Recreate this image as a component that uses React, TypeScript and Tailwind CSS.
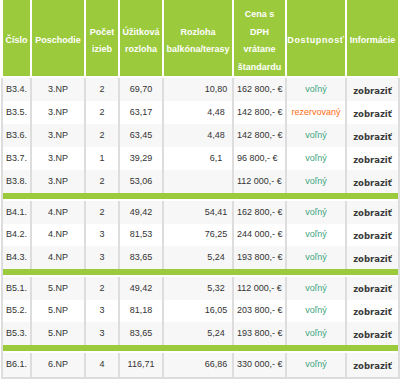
import React from "react";

type Row = {
  id: string;
  floor: string;
  rooms: string;
  area: string;
  balcony: string;
  price: string;
  status: "voľný" | "rezervovaný";
};

const groups: Row[][] = [
  [
    { id: "B3.4.", floor: "3.NP", rooms: "2", area: "69,70", balcony: "10,80", price: "162 800,- €", status: "voľný" },
    { id: "B3.5.", floor: "3.NP", rooms: "2", area: "63,17", balcony: "4,48", price: "142 800,- €", status: "rezervovaný" },
    { id: "B3.6.", floor: "3.NP", rooms: "2", area: "63,45", balcony: "4,48", price: "142 800,- €", status: "voľný" },
    { id: "B3.7.", floor: "3.NP", rooms: "1", area: "39,29", balcony: "6,1", price: "96 800,- €", status: "voľný" },
    { id: "B3.8.", floor: "3.NP", rooms: "2", area: "53,06", balcony: "", price: "112 000,- €", status: "voľný" },
  ],
  [
    { id: "B4.1.", floor: "4.NP", rooms: "2", area: "49,42", balcony: "54,41", price: "162 800,- €", status: "voľný" },
    { id: "B4.2.", floor: "4.NP", rooms: "3", area: "81,53", balcony: "76,25", price: "244 000,- €", status: "voľný" },
    { id: "B4.3.", floor: "4.NP", rooms: "3", area: "83,65", balcony: "5,24", price: "193 800,- €", status: "voľný" },
  ],
  [
    { id: "B5.1.", floor: "5.NP", rooms: "2", area: "49,42", balcony: "5,32", price: "112 000,- €", status: "voľný" },
    { id: "B5.2.", floor: "5.NP", rooms: "3", area: "81,18", balcony: "16,05", price: "203 800,- €", status: "voľný" },
    { id: "B5.3.", floor: "5.NP", rooms: "3", area: "83,65", balcony: "5,24", price: "193 800,- €", status: "voľný" },
  ],
  [
    { id: "B6.1.", floor: "6.NP", rooms: "4", area: "116,71", balcony: "66,86", price: "330 000,- €", status: "voľný" },
  ],
];

const headers: { label: React.ReactNode; extra?: string }[] = [
  { label: "Číslo" },
  { label: "Poschodie" },
  { label: <>Počet<br />izieb</> },
  { label: <>Úžitková<br />rozloha</> },
  { label: <>Rozloha<br />balkóna/terasy</> },
  { label: <>Cena s<br />DPH<br />vrátane<br />štandardu</> },
  { label: "Dostupnosť", extra: "tracking-[0.6px]" },
  { label: "Informácie" },
];

const widths = [29, 54, 34, 44, 70, 53, 60, 55];

export default function App() {
  return (
    <div className="w-[402px] h-[383px] bg-white overflow-hidden pl-[1px]">
      <table
        className="border-separate border-spacing-0 table-fixed text-[9px] text-[#333]"
        style={{ width: 399, fontFamily: '"Liberation Sans", Arial, sans-serif' }}
      >
        <colgroup>
          {widths.map((w, i) => (
            <col key={i} style={{ width: w }} />
          ))}
        </colgroup>
        <thead>
          <tr>
            {headers.map((h, i) => (
              <th
                key={i}
                className={`h-[78px] p-0 pt-[6px] align-middle text-center font-bold text-white bg-[#9bca3c] leading-[17.5px] border-l-2 border-b-2 border-white ${
                  i === headers.length - 1 ? "border-r-2" : ""
                } ${h.extra ?? ""}`}
              >
                {h.label}
              </th>
            ))}
          </tr>
        </thead>
        <tbody>
          {groups.map((group, gi) => (
            <React.Fragment key={gi}>
              {gi > 0 && (
                <tr>
                  <td colSpan={8} className="h-[8px] p-0 border-l-2 border-r-2 border-[#dddddd] align-top">
                    <div className="h-[6px] bg-[#9bca3c]" />
                  </td>
                </tr>
              )}
              {group.map((r, ri) => {
                const last = gi === groups.length - 1;
                const bg = ri % 2 === 0 ? "bg-[#f7f7f7]" : "bg-white";
                const h = gi === 0 ? "h-[23px]" : last ? "h-[26px]" : "h-[22.67px]";
                const cell = `p-0 align-middle border-l-2 border-[#dddddd] ${bg} ${last ? "border-b-2" : ""}`;
                return (
                  <tr key={r.id} className={h}>
                    <td className={`${cell} pl-[3px] text-left`}>{r.id}</td>
                    <td className={`${cell} text-center`}>{r.floor}</td>
                    <td className={`${cell} text-center`}>{r.rooms}</td>
                    <td className={`${cell} text-center`}>{r.area}</td>
                    <td className={`${cell} pl-[36px] text-center`}>{r.balcony}</td>
                    <td className={`${cell} pl-[3px] text-left whitespace-nowrap`}>{r.price}</td>
                    <td
                      className={`${cell} text-center ${
                        r.status === "voľný" ? "text-[#3da57c]" : "text-[#ff6a10]"
                      }`}
                    >
                      {r.status}
                    </td>
                    <td
                      className={`${cell} border-r-2 text-center pt-[3px] font-bold text-[8.5px] text-[#3a3a3a]`}
                      style={{ fontFamily: '"DejaVu Sans", Verdana, sans-serif' }}
                    >
                      zobraziť
                    </td>
                  </tr>
                );
              })}
            </React.Fragment>
          ))}
        </tbody>
      </table>
    </div>
  );
}
